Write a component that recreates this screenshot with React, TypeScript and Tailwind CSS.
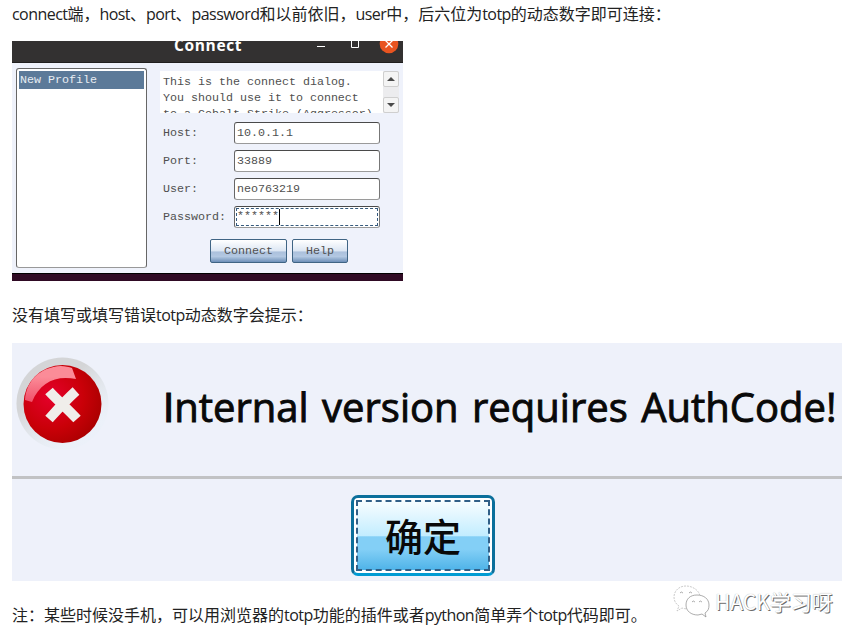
import type { ReactNode } from "react";

const fields = [
  { label: "Host:", value: "10.0.1.1" },
  { label: "Port:", value: "33889" },
  { label: "User:", value: "neo763219" },
];

function Paragraph({ children }: { children: ReactNode }) {
  return (
    <p className="h-6 pl-3 font-['Open_Sans','Noto_Sans_CJK_SC',sans-serif] text-[16px] leading-6 whitespace-nowrap text-[#222]">
      {children}
    </p>
  );
}

function Latin({ children }: { children: ReactNode }) {
  return <span className="tracking-[-0.55px]">{children}</span>;
}

function ScrollButton({ down = false }: { down?: boolean }) {
  return (
    <div className="flex h-4 w-4 items-center justify-center rounded-[2px] border border-[#cfcfcf] bg-[#f4f4f4]">
      <svg width="8" height="4" viewBox="0 0 8 4">
        <path d={down ? "M0 0h8L4 4z" : "M0 4h8L4 0z"} fill="#4a4a4a" />
      </svg>
    </div>
  );
}

function ConnectDialog() {
  return (
    <div className="ml-3 flex h-60 w-[391px] flex-col overflow-hidden bg-[#2f0a24] font-['Liberation_Mono',monospace] text-[11.67px] text-[#505050]">
      {/* Title bar */}
      <div className="flex h-[22px] shrink-0 overflow-hidden border-b border-[#201f1f] bg-[#333131]">
        <div className="-mt-[7px] ml-[162px] w-[142px] font-['Open_Sans',sans-serif] text-[15.5px] leading-[22px] font-bold tracking-[0.65px] text-white">
          Connect
        </div>
        <svg width="87" height="21" viewBox="0 0 87 21" fill="none">
          <path d="M1 5.500h8" stroke="#fff" />
          <path d="M35.500 0v6.500h7V0" stroke="#fff" />
          <circle cx="73" cy="3" r="9.300" fill="#e95420" />
          <path d="M69.500-.5l7 7m0-7l-7 7" stroke="#fff" strokeWidth="1.300" />
        </svg>
      </div>

      {/* Body */}
      <div className="flex h-[211px] shrink-0 border-b border-black bg-[#eff2fb] pt-[5px] pl-1">
        <div className="h-[200px] w-[131px] rounded-[3px] border border-[#666] border-b-[#999] bg-white p-[2px]">
          <div className="h-[18px] bg-[#5c7a99] pl-px leading-[19px] text-[#e8edf2]">New Profile</div>
        </div>

        <div className="ml-[13px] flex w-[239px] flex-col">
          <div className="mt-[3px] flex h-[42px]">
            <div className="w-[223px] overflow-hidden bg-white pt-[3px] pl-[3px] leading-4 whitespace-pre">
              <div>This is the connect dialog.</div>
              <div>You should use it to connect</div>
              <div>to a Cobalt Strike (Aggressor)</div>
            </div>
            <div className="flex w-4 flex-col justify-between bg-[#ececee]">
              <ScrollButton />
              <ScrollButton down />
            </div>
          </div>

          <div className="mt-[9px] flex flex-col gap-[6px]">
            {fields.map((f) => (
              <div key={f.label} className="flex h-[22px] items-center">
                <div className="w-[74px] pt-[2px] pl-[3px]">{f.label}</div>
                <div className="h-[22px] w-[146px] rounded-[3px] border border-[#9a9a9a] border-t-[#4a4a4a] border-r-[#777] border-l-[#666] bg-white pl-[2px] leading-5">
                  {f.value}
                </div>
              </div>
            ))}
            <div className="flex h-[22px] items-center">
              <div className="w-[74px] pt-[2px] pl-[3px]">Password:</div>
              <div className="h-[22px] w-[146px] rounded-[3px] border border-[#9a9a9a] border-t-[#4a4a4a] border-r-[#777] border-l-[#666] bg-white p-px">
                <div className="flex h-[18px] border border-dashed border-[#365a7d] leading-[14px]">
                  <span>******</span>
                  <span className="h-4 w-px bg-black" />
                </div>
              </div>
            </div>
          </div>

          <div className="mt-[11px] flex gap-[5px] pl-[50px] leading-[23px]">
            <button className="h-6 w-[77px] rounded-[2px] border border-[#3f6484] bg-[linear-gradient(#fff,#dce6f3_50%,#abc0dc_54%,#b3c8e2_75%,#6d8fb8)]">
              Connect
            </button>
            <button className="h-6 w-[56px] rounded-[2px] border border-[#3f6484] bg-[linear-gradient(#fff,#dce6f3_50%,#abc0dc_54%,#b3c8e2_75%,#6d8fb8)]">
              Help
            </button>
          </div>
        </div>
      </div>
    </div>
  );
}

function ErrorIcon() {
  return (
    <svg className="shrink-0" width="100" height="110" viewBox="0 0 100 110">
      <defs>
        <radialGradient id="red" cx="35%" cy="40%" r="70%">
          <stop offset="0" stopColor="#e5002b" />
          <stop offset="0.600" stopColor="#c90008" />
          <stop offset="1" stopColor="#a90000" />
        </radialGradient>
        <linearGradient id="ring" x1="0" y1="0" x2="0.700" y2="1">
          <stop offset="0.400" stopColor="#d4d5d7" />
          <stop offset="0.900" stopColor="#e7f0f7" stopOpacity="0.300" />
        </linearGradient>
        <linearGradient id="gloss" x1="0" y1="0" x2="0" y2="1">
          <stop offset="0.300" stopColor="#fb8c98" />
          <stop offset="1" stopColor="#f0506a" />
        </linearGradient>
      </defs>
      <circle cx="50.500" cy="60.500" r="46" fill="url(#ring)" />
      <circle cx="50.500" cy="61" r="39" fill="url(#red)" />
      <path d="M13 57C14 38 28 24 49 23c4 0 8 1 11 2l4 11C44 32 28 39 20 59z" fill="url(#gloss)" />
      <path d="M37 48c7 8 18 17 28 28M64 48C53 58 46 66 37 76" fill="none" stroke="#f0eeea" strokeWidth="10" />
    </svg>
  );
}

function ErrorDialog() {
  return (
    <div className="ml-3 h-[238px] w-[830px] overflow-hidden bg-[#eef1fa]">
      <div className="flex h-[136px] border-b-[3px] border-[#c1c2c4]">
        <ErrorIcon />
        <div className="ml-[51px] pt-[37px] font-['Open_Sans',sans-serif] text-[40px] leading-[54px] [word-spacing:3px] whitespace-nowrap text-[#090909] [-webkit-text-stroke:0.9px_#090909]">
          <span className="font-['Lato',sans-serif]">I</span>nternal version requires AuthCode!
        </div>
      </div>
      <div className="flex justify-center pt-4 pr-[8px]">
        <button className="h-[81px] w-[144px] rounded-[7px] border-[3px] border-[#0b6f9b] border-b-[#009bd3] bg-white p-[3px]">
          <span className="flex h-full items-center justify-center bg-[linear-gradient(#f8fdff,#c3edff_50%,#83cff6_52%,#83cff6_70%,#4fb3e8)] pb-[1px] font-['Noto_Sans_CJK_SC',sans-serif] text-[38px] leading-[60px] font-medium text-[#090909] outline-2 -outline-offset-1 outline-[#315f87] outline-dashed">
            确定
          </span>
        </button>
      </div>
    </div>
  );
}

function Watermark() {
  return (
    <div className="absolute top-[584px] left-[673px] flex">
      <svg width="38" height="34" viewBox="0 0 38 34" fill="#fff" stroke="#8a8a8a" strokeWidth="0.700">
        <path d="M13 2C6 2 1 7 1 13c0 4 2 7 5 9l-2 5 5-3c9 3 18-2 18-11C27 7 20 2 13 2z" stroke="#b5b5b5" strokeDasharray="2 1" />
        <path d="M24 11c-7 0-11 4-11 10s5 10 12 10l4-1 4 3-1-4c3-2 4-4 4-8 0-6-5-10-12-10z" />
        <path d="M7 9q1-2 3 0M16 9q1-2 3 0M19 18q1-2 3 0M26 18q1-2 3 0" fill="none" />
      </svg>
      <div className="ml-[4px] font-['Noto_Sans_CJK_SC',sans-serif] text-[21px] leading-[35px] whitespace-nowrap text-white [text-shadow:1px_1px_0_#6b6b6b,0_0_1px_#a0a0a0]">
        HACK学习呀
      </div>
    </div>
  );
}

export default function App() {
  return (
    <div className="relative h-[640px] w-[860px] overflow-hidden bg-white pt-[2px]">
      <Paragraph>
        <Latin>connect</Latin>端，<Latin>host</Latin>、<Latin>port</Latin>、<Latin>password</Latin>
        和以前依旧，<Latin>user</Latin>中，后六位为<Latin>totp</Latin>的动态数字即可连接：
      </Paragraph>
      <div className="mt-[15px]">
        <ConnectDialog />
      </div>
      <div className="mt-[22px]">
        <Paragraph>
          没有填写或填写错误<Latin>totp</Latin>动态数字会提示：
        </Paragraph>
      </div>
      <div className="mt-[16px]">
        <ErrorDialog />
      </div>
      <div className="mt-[22px]">
        <Paragraph>
          注：某些时候没手机，可以用浏览器的<Latin>totp</Latin>功能的插件或者<Latin>python</Latin>简单弄个
          <Latin>totp</Latin>代码即可。
        </Paragraph>
      </div>
      <Watermark />
    </div>
  );
}
